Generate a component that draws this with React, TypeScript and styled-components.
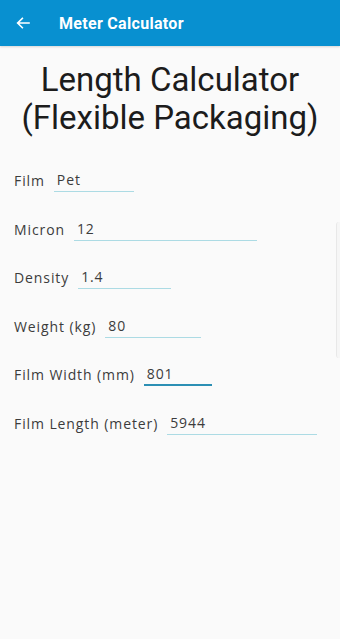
import React from "react";
import styled, { createGlobalStyle } from "styled-components";

const Global = createGlobalStyle`
  html, body { margin: 0; padding: 0; background: #fafafa; }
  body { font-family: Roboto, "Noto Sans", sans-serif; }
  * { box-sizing: border-box; }
`;

const Screen = styled.div`
  position: relative;
  width: 340px;
  height: 639px;
  background: #fafafa;
  overflow: hidden;
`;

const AppBar = styled.header`
  height: 46px;
  background: #0890d0;
  display: flex;
  align-items: center;
  padding-left: 14px;
  color: #fff;
  box-shadow: 0 1px 2px rgba(0, 0, 0, 0.15);
`;

const BackButton = styled.span`
  width: 18px;
  height: 18px;
  display: flex;
  align-items: center;
  justify-content: center;
  margin-right: 27px;
`;

const BarTitle = styled.h1`
  margin: 0;
  font-size: 16px;
  font-weight: 700;
  letter-spacing: 0.3px;
`;

const Heading = styled.h2`
  margin: 15px 0 0;
  text-align: center;
  font-size: 33px;
  font-weight: 400;
  line-height: 38px;
  color: #1c1c1c;
`;

const Form = styled.div`
  display: flex;
  flex-direction: column;
  gap: 23.6px;
  padding: 30px 0 0 14px;
`;

const Row = styled.div`
  display: flex;
  align-items: flex-end;
  height: 25px;
`;

const Label = styled.span`
  font-family: "Open Sans", Roboto, sans-serif;
  font-size: 14px;
  letter-spacing: 0.9px;
  color: #3c3c3c;
  line-height: 20px;
  padding-bottom: 1px;
`;

const Field = styled.div<{ $w: number; $focused?: boolean }>`
  margin-left: 9px;
  width: ${(p) => p.$w}px;
  height: 25px;
  font-family: "Open Sans", Roboto, sans-serif;
  font-size: 14px;
  letter-spacing: 0.9px;
  color: #3c3c3c;
  padding: 0 0 0 3px;
  line-height: 20px;
  border-bottom: ${(p) => (p.$focused ? "2px solid #2c8fb4" : "1px solid #acdbe4")};
  padding-bottom: ${(p) => (p.$focused ? 0 : 1)}px;
  display: flex;
  align-items: flex-end;
`;

const EdgeGlow = styled.div`
  position: absolute;
  right: 0;
  top: 222px;
  width: 4px;
  height: 136px;
  border-left: 1px solid #e8e8e8;
  border-radius: 3px 0 0 3px;
  background: #f6f6f6;
`;

const rows = [
  { label: "Film", value: "Pet", w: 80 },
  { label: "Micron", value: "12", w: 183 },
  { label: "Density", value: "1.4", w: 93 },
  { label: "Weight (kg)", value: "80", w: 96 },
  { label: "Film Width (mm)", value: "801", w: 68, focused: true },
  { label: "Film Length (meter)", value: "5944", w: 150 },
];

export default function App() {
  return (
    <Screen>
      <Global />
      <AppBar>
        <BackButton>
          <svg width="16" height="16" viewBox="0 0 24 24" fill="none" stroke="#fff" strokeWidth="2.4" strokeLinecap="square">
            <path d="M21 12H4M11 5l-7 7 7 7" />
          </svg>
        </BackButton>
        <BarTitle>Meter Calculator</BarTitle>
      </AppBar>
      <Heading>
        Length Calculator
        <br />
        (Flexible Packaging)
      </Heading>
      <Form>
        {rows.map((r) => (
          <Row key={r.label}>
            <Label>{r.label}</Label>
            <Field $w={r.w} $focused={r.focused}>
              {r.value}
            </Field>
          </Row>
        ))}
      </Form>
      <EdgeGlow />
    </Screen>
  );
}
